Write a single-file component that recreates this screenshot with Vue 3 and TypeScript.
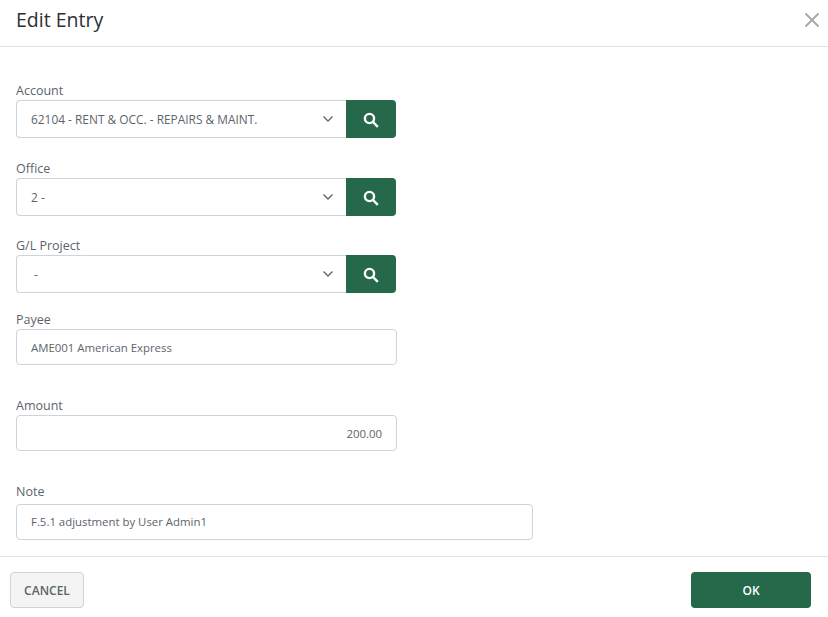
<template>
  <div class="dialog">
    <header class="head">
      <h1>Edit Entry</h1>
      <svg class="close" width="16" height="16" viewBox="0 0 16 16">
        <path d="M1.5 1.5l13 13M14.5 1.5l-13 13" />
      </svg>
    </header>

    <section class="body">
      <div v-for="item in selects" :key="item.label" class="field" :class="item.cls">
        <label>{{ item.label }}</label>
        <div class="picker">
          <div class="select">
            <span>{{ item.value }}</span>
            <svg class="chevron" width="12" height="8" viewBox="0 0 12 8">
              <path d="M1.5 1.5L6 6l4.500-4.500" />
            </svg>
          </div>
          <button class="search" type="button">
            <svg width="16" height="16" viewBox="0 0 16 16">
              <circle cx="6.500" cy="6.500" r="4.600" />
              <path d="M10 10l4.800 4.800" />
            </svg>
          </button>
        </div>
      </div>

      <div class="field payee">
        <label>Payee</label>
        <div class="input">AME001 American Express</div>
      </div>
      <div class="field amount">
        <label>Amount</label>
        <div class="input right">200.00</div>
      </div>
      <div class="field note">
        <label>Note</label>
        <div class="input wide">F.5.1 adjustment by User Admin1</div>
      </div>
    </section>

    <footer class="foot">
      <button class="cancel" type="button">CANCEL</button>
      <button class="ok" type="button">OK</button>
    </footer>
  </div>
</template>

<script setup lang="ts">
const selects = [
  { label: 'Account', value: '62104 - RENT & OCC. - REPAIRS & MAINT.', cls: 'account' },
  { label: 'Office', value: '2 -', cls: 'office' },
  { label: 'G/L Project', value: ' -', cls: 'project' },
];
</script>

<style>
html, body { background: #fff; }
</style>

<style scoped>
.dialog {
  width: 828px;
  height: 617px;
  font-family: "Open Sans", "Noto Sans", sans-serif;
  color: #5c646b;
  background: #fff;
  overflow: hidden;
}

.head {
  height: 47px;
  box-sizing: border-box;
  border-bottom: 1px solid #dee2e6;
  display: flex;
  align-items: center;
  justify-content: space-between;
  padding: 0 8px 6px 16px;
}

.head h1 {
  margin: 0 0 2px;
  font-size: 19.500px;
  font-weight: 400;
  color: #2b3036;
}

.close path {
  fill: none;
  stroke: #a9a9a9;
  stroke-width: 2;
}

.body {
  height: 509px;
  padding: 33px 0 0 16px;
  box-sizing: border-box;
}

.field label {
  display: block;
  height: 20px;
  font-size: 12.500px;
  line-height: 22px;
}

.office { margin-top: 20px; }
.project { margin-top: 19px; }
.payee { margin-top: 16px; }
.amount { margin-top: 30px; }
.note { margin-top: 33px; }

.note label { line-height: 16px; }

.picker {
  display: flex;
  width: 380px;
  height: 38px;
}

.select {
  flex: 1;
  display: flex;
  align-items: center;
  justify-content: space-between;
  padding: 0 12px 0 14px;
  border: 1px solid #ced4da;
  border-right: 0;
  border-radius: 4px 0 0 4px;
  font-size: 11.900px;
  white-space: pre;
}

.chevron path {
  fill: none;
  stroke: #5a6470;
  stroke-width: 1.300;
}

.search {
  width: 50px;
  padding: 2px 0 0;
  border: 0;
  border-radius: 0 4px 4px 0;
  background: #26694a;
  display: flex;
  align-items: center;
  justify-content: center;
}

.search circle,
.search path {
  fill: none;
  stroke: #fff;
  stroke-width: 2.400;
}

.input {
  width: 381px;
  height: 36px;
  box-sizing: border-box;
  padding: 0 14px;
  border: 1px solid #ced4da;
  border-radius: 4px;
  font-size: 11.400px;
  line-height: 36px;
}

.input.right { text-align: right; }
.input.wide { width: 517px; line-height: 34px; }

.foot {
  height: 61px;
  box-sizing: border-box;
  border-top: 1px solid #dee2e6;
  display: flex;
  justify-content: space-between;
  align-items: flex-start;
  padding: 15px 17px 0 10px;
}

.foot button {
  height: 36px;
  font-family: inherit;
  font-size: 12px;
  font-weight: 600;
  border-radius: 4px;
}

.cancel {
  width: 74px;
  background: #f4f4f4;
  border: 1px solid #ced4da;
  color: #5c646b;
}

.ok {
  width: 120px;
  background: #26694a;
  border: 0;
  color: #fff;
}
</style>
